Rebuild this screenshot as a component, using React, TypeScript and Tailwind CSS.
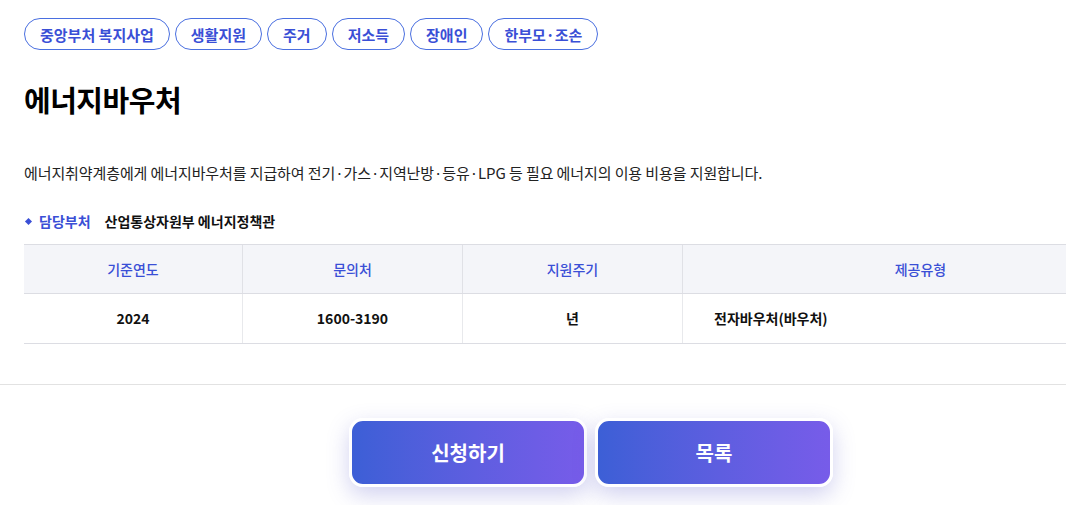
import React from "react";

const tags = ["중앙부처 복지사업", "생활지원", "주거", "저소득", "장애인", "한부모·조손"];

export default function App() {
  return (
    <div
      className="w-[1066px] h-[505px] overflow-hidden bg-white text-[#111]"
      style={{ fontFamily: '"Noto Sans CJK KR", "Noto Sans", sans-serif' }}
    >
      <div className="pl-6 pt-[18px]">
        <div className="flex gap-[5px]">
          {tags.map((t) => (
            <span
              key={t}
              className="h-[32px] px-[15px] flex items-center rounded-full border border-[#4a6fe0] text-[#3a4fd6] text-[15px] font-semibold leading-none"
            >
              {t}
            </span>
          ))}
        </div>
        <h1 className="mt-[29px] text-[29px] font-bold leading-[40px] tracking-[-0.5px] text-black">에너지바우처</h1>
        <p className="mt-[43px] text-[15px] leading-[22px] text-[#222] tracking-[-0.1px]">
          에너지취약계층에게 에너지바우처를 지급하여 전기·가스·지역난방·등유·LPG 등 필요 에너지의 이용 비용을 지원합니다.
        </p>
        <div className="mt-[27px] flex items-center text-[14px] font-semibold leading-[20px]">
          <span className="w-[5px] h-[5px] bg-[#3a4fd6] rotate-45 ml-[2px] mr-[8px]" />
          <span className="text-[#3a4fd6]">담당부처</span>
          <span className="ml-[14px] text-[#111]">산업통상자원부 에너지정책관</span>
        </div>
        <div className="mt-[13px] w-[1134px] border-t border-[#dcdde3]">
          <div className="flex h-[49px] bg-[#f4f5f9] border-b border-[#dcdde3] text-[14px] text-[#3a4fd6] font-medium">
            <div className="w-[219px] flex items-center justify-center border-r border-[#e0e1e6]">기준연도</div>
            <div className="w-[220px] flex items-center justify-center border-r border-[#e0e1e6]">문의처</div>
            <div className="w-[220px] flex items-center justify-center border-r border-[#e0e1e6]">지원주기</div>
            <div className="flex-1 flex items-center justify-center">제공유형</div>
          </div>
          <div className="flex h-[50px] border-b border-[#dcdde3] text-[14px] font-semibold text-[#111]">
            <div className="w-[219px] flex items-center justify-center border-r border-[#e8e9ec]">2024</div>
            <div className="w-[220px] flex items-center justify-center border-r border-[#e8e9ec]">1600-3190</div>
            <div className="w-[220px] flex items-center justify-center border-r border-[#e8e9ec]">년</div>
            <div className="flex-1 flex items-center pl-[31px]">전자바우처(바우처)</div>
          </div>
        </div>
      </div>
      <div className="mt-[40px] border-t border-[#e2e2e2]" />
      <div className="mt-[33px] flex justify-center gap-[8px] pl-[232px] pr-[116px]">
        <button className="w-[238px] h-[69px] rounded-[14px] border-[3px] border-white bg-gradient-to-r from-[#3c5fd6] to-[#775ce9] text-white text-[20px] font-bold shadow-[0_8px_22px_rgba(90,90,200,0.28)]">
          신청하기
        </button>
        <button className="w-[238px] h-[69px] rounded-[14px] border-[3px] border-white bg-gradient-to-r from-[#3c5fd6] to-[#775ce9] text-white text-[20px] font-bold shadow-[0_8px_22px_rgba(90,90,200,0.28)]">
          목록
        </button>
      </div>
    </div>
  );
}
